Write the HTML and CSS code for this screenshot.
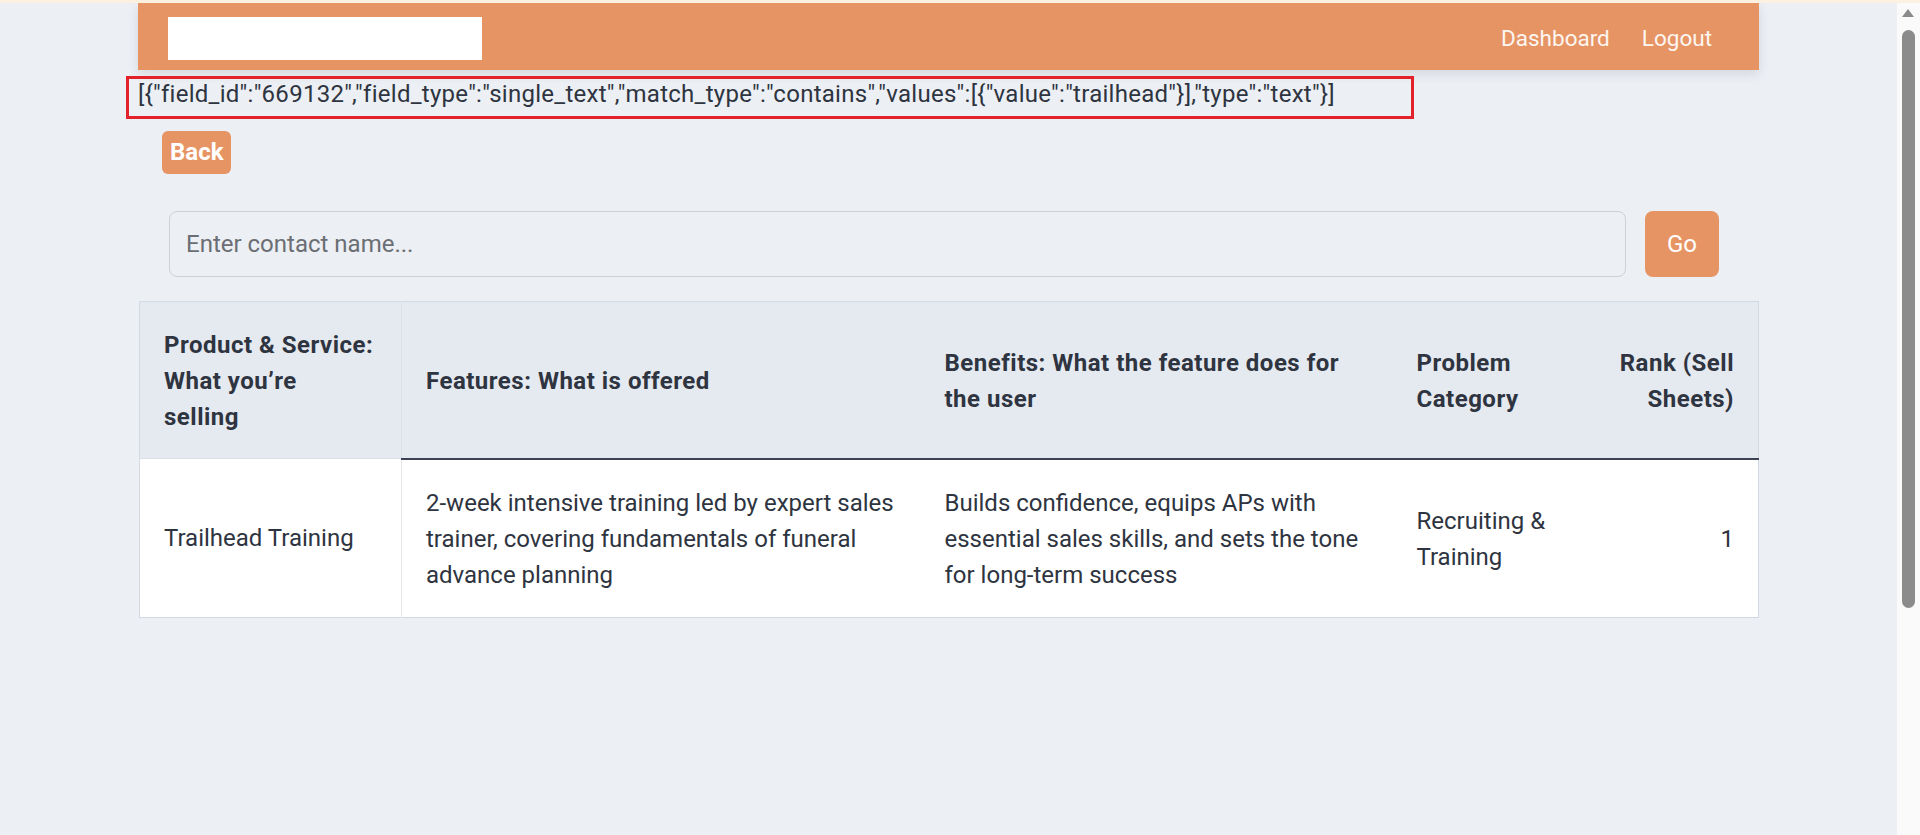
FILE: index.html
```html
<!DOCTYPE html>
<html lang="en">
<head>
<meta charset="utf-8">
<title>Sell Sheets</title>
<link rel="stylesheet" href="styles.css">
</head>
<body>
<div class="container">
  <nav class="navbar">
    <div class="brand"></div>
    <div class="nav-links">
      <a href="#" class="nav-link">Dashboard</a>
      <a href="#" class="nav-link">Logout</a>
    </div>
  </nav>

  <div class="query"><span class="query-text">[{"field_id":"669132","field_type":"single_text","match_type":"contains","values":[{"value":"trailhead"}],"type":"text"}]</span></div>

  <div class="back-row"><a class="btn btn-back" href="#">Back</a></div>

  <form class="search">
    <input class="search-input" type="text" placeholder="Enter contact name...">
    <button class="btn btn-go" type="button">Go</button>
  </form>

  <table class="sheet">
    <colgroup>
      <col class="c1"><col class="c2"><col class="c3"><col class="c4"><col class="c5">
    </colgroup>
    <thead>
      <tr>
        <th class="sticky">Product &amp; Service: What you’re selling</th>
        <th>Features: What is offered</th>
        <th>Benefits: What the feature does for the user</th>
        <th>Problem Category</th>
        <th class="num">Rank (Sell Sheets)</th>
      </tr>
    </thead>
    <tbody>
      <tr>
        <td class="sticky">Trailhead Training</td>
        <td>2-week intensive training led by expert sales trainer, covering fundamentals of funeral advance planning</td>
        <td>Builds confidence, equips APs with essential sales skills, and sets the tone for long-term success</td>
        <td>Recruiting &amp; Training</td>
        <td class="num">1</td>
      </tr>
    </tbody>
  </table>
</div>

<div class="scrollbar" aria-hidden="true">
  <div class="scroll-arrow"></div>
  <div class="scroll-thumb"></div>
</div>
</body>
</html>
```

FILE: styles.css
```css
* { box-sizing: border-box; }

html { background: #eceff4; }

body {
  margin: 0 23px 0 0;
  border-top: 3px solid #fcf1e1;
  background: #eceff4;
  color: #2e3440;
  font-family: Roboto, "Open Sans", sans-serif;
  font-size: 24px;
  line-height: 36px;
}

/* browser scrollbar replica */
.scrollbar {
  position: fixed;
  top: 0;
  right: 0;
  width: 23px;
  height: 100vh;
  background: #fafafa;
  border-top: 3px solid #fcf1e1;
}
.scroll-arrow {
  position: absolute;
  top: 6px;
  left: 5px;
  width: 0;
  height: 0;
  border-left: 6.5px solid transparent;
  border-right: 6.5px solid transparent;
  border-bottom: 8px solid #8b8b8b;
}
.scroll-thumb {
  position: absolute;
  top: 27px;
  left: 5px;
  width: 13px;
  height: 578px;
  border-radius: 7px;
  background: #8b8b8b;
}

.container {
  width: 1621px;
  margin: 0 auto;
}

/* navbar */
.navbar {
  height: 67px;
  background: #e79465;
  display: flex;
  align-items: center;
  justify-content: space-between;
  padding: 0 47px 0 30px;
  box-shadow: 0 4px 10px rgba(46, 52, 64, 0.12);
}
.brand {
  width: 314px;
  height: 43px;
  margin-top: 4px;
  background: #ffffff;
}
.nav-links {
  display: flex;
  gap: 32px;
  padding-top: 2px;
}
.nav-link {
  color: #fdf6f0;
  text-decoration: none;
  font-size: 22.5px;
  line-height: 30px;
}

/* query annotation */
.query {
  margin-top: 6px;
  height: 36px;
}
.query-text {
  position: relative;
  display: inline-block;
  white-space: nowrap;
  letter-spacing: 0.27px;
}
.query-text::after {
  content: "";
  position: absolute;
  top: 0;
  left: -12px;
  width: 1282px;
  height: 37px;
  border: 3px solid #e3212b;
}

/* back */
.back-row {
  margin: 19px 0 0 24px;
  height: 43px;
}
.btn-back {
  display: inline-block;
  background: #e79465;
  color: #ffffff;
  font-weight: 700;
  padding: 4px 8px;
  line-height: 35px;
  border-radius: 6px;
  text-decoration: none;
}

/* search */
.search {
  display: flex;
  gap: 19px;
  margin: 37px 40px 0 31px;
}
.search-input {
  flex: 1;
  height: 66px;
  border: 1px solid #cdd1d6;
  border-radius: 8px;
  background: transparent;
  padding: 0 16px;
  font: inherit;
  color: inherit;
  outline: none;
}
.search-input::placeholder { color: #6b6e73; }
.btn-go {
  width: 74px;
  height: 66px;
  border: 0;
  border-radius: 8px;
  background: #e79465;
  color: #ffffff;
  font: inherit;
}

/* table */
.sheet {
  width: 1619px;
  margin: 24px 0 0 1px;
  border-collapse: collapse;
  table-layout: fixed;
  border: 1px solid #d3d9e3;
  background: #ffffff;
}
.c1 { width: 262px; }
.c2 { width: 519px; }
.c3 { width: 472px; }
.c4 { width: 199px; }
.c5 { width: 167px; }

.sheet th,
.sheet td {
  padding: 24px;
  text-align: left;
  vertical-align: middle;
}
.sheet td { padding-top: 25px; }
.sheet th {
  background: #e5e9f0;
  font-weight: 700;
  letter-spacing: 0.5px;
  padding-top: 25px;
  padding-bottom: 23px;
  border-bottom: 2px solid #3b4252;
}
.sheet th.sticky {
  border-bottom: 1px solid #dcdfe4;
  border-right: 1px solid #dde1e6;
}
.sheet td.sticky {
  border-right: 1px solid #e6e8ec;
}
.sheet .num { text-align: right; }
```
